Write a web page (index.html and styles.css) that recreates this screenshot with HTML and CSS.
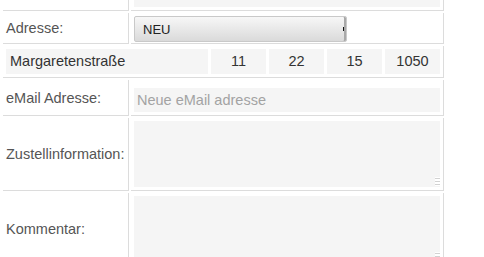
FILE: index.html
```html
<!DOCTYPE html>
<html lang="de">
<head>
    <meta charset="UTF-8">
    <title>Bestellung</title>
    <link rel="stylesheet" href="styles.css">
</head>
<body>
    <form class="order-form">
        <table class="form-table">
            <tr>
                <td class="label"></td>
                <td class="field field-text"><input type="text" class="text-input"></td>
            </tr>
            <tr>
                <td class="label">Adresse:</td>
                <td class="field field-select">
                    <span class="select-wrap">
                        <select class="select-box">
                            <option>NEU</option>
                        </select>
                    </span>
                </td>
            </tr>
            <tr>
                <td class="field" colspan="2">
                    <div class="address-row">
                        <div class="addr-box addr-street">Margaretenstraße</div>
                        <div class="addr-box addr-num">11</div>
                        <div class="addr-box addr-num">22</div>
                        <div class="addr-box addr-num">15</div>
                        <div class="addr-box addr-num">1050</div>
                    </div>
                </td>
            </tr>
            <tr>
                <td class="label">eMail Adresse:</td>
                <td class="field field-text"><input type="text" class="text-input" placeholder="Neue eMail adresse"></td>
            </tr>
            <tr>
                <td class="label">Zustellinformation:</td>
                <td class="field"><span class="area-wrap"><textarea class="text-area"></textarea></span></td>
            </tr>
            <tr>
                <td class="label">Kommentar:</td>
                <td class="field"><span class="area-wrap"><textarea class="text-area"></textarea></span></td>
            </tr>
        </table>
    </form>
</body>
</html>
```

FILE: styles.css
```css
/* ===== Page ===== */
body {
    margin: 0;
    padding: 0 0 0 1px;
    background: #fff;
    font-family: 'Liberation Sans', Arial, sans-serif;
    font-size: 14.5px;
    color: #333;
    overflow: hidden;
}

/* page is scrolled a little, first row is cut */
.order-form {
    margin-top: -27px;
}

/* ===== Table ===== */
.form-table {
    width: 445px;
    table-layout: fixed;
    border-collapse: separate;
    border-spacing: 2px;
}

.form-table td {
    box-sizing: border-box;
    border-right: 1px solid #dcdcdc;
    border-bottom: 1px solid #dcdcdc;
}

.label {
    width: 126px;
    padding: 0 3px;
    color: #555;
    vertical-align: middle;
    white-space: nowrap;
}

.field {
    padding: 3px;
    vertical-align: top;
}

.field-text {
    padding-top: 8px;
}

.field-select {
    padding-bottom: 1px;
}

/* ===== Inputs ===== */
.text-input {
    display: block;
    box-sizing: border-box;
    width: 100%;
    height: 24px;
    margin: 0;
    padding: 0 3px;
    border: none;
    background: #f5f5f5;
    font-family: inherit;
    font-size: 14.5px;
    color: #333;
    outline: none;
}

.text-input::placeholder {
    color: #a3a3a3;
}

.area-wrap {
    position: relative;
    display: block;
}

/* light resize grip like the original */
.area-wrap::after {
    content: "";
    position: absolute;
    right: 0;
    bottom: 1px;
    width: 5px;
    height: 9px;
    background: repeating-linear-gradient(#fff 0 1px, #d2d2d2 1px 2px, #fff 2px 3px);
}

.text-area {
    display: block;
    box-sizing: border-box;
    width: 100%;
    height: 66px;
    margin: 0;
    padding: 3px;
    border: none;
    background: #f5f5f5;
    font-family: inherit;
    font-size: 14.5px;
    resize: none;
    outline: none;
}

/* ===== Select ===== */
.select-wrap {
    position: relative;
    display: inline-block;
}

.select-wrap::after {
    content: "";
    position: absolute;
    top: 11px;
    right: 3px;
    width: 1px;
    height: 4px;
    background: #111;
}

.select-box {
    display: block;
    box-sizing: border-box;
    width: 213px;
    height: 26px;
    margin: 0;
    padding: 0 0 0 8px;
    border: 1px solid #c9c9c9;
    border-radius: 2px;
    background: linear-gradient(#f7f7f7, #dadada);
    box-shadow: inset -2px 0 0 #a9a9a9;
    font-family: inherit;
    font-size: 13px;
    color: #222;
    -webkit-appearance: none;
    appearance: none;
}

/* ===== Street / number row ===== */
.address-row {
    display: flex;
    gap: 3px;
}

.addr-box {
    height: 25px;
    line-height: 25px;
    background: #f5f5f5;
    color: #333;
}

.addr-street {
    flex: 1;
    padding-left: 4px;
}

.addr-num {
    width: 55px;
    text-align: center;
}
```
